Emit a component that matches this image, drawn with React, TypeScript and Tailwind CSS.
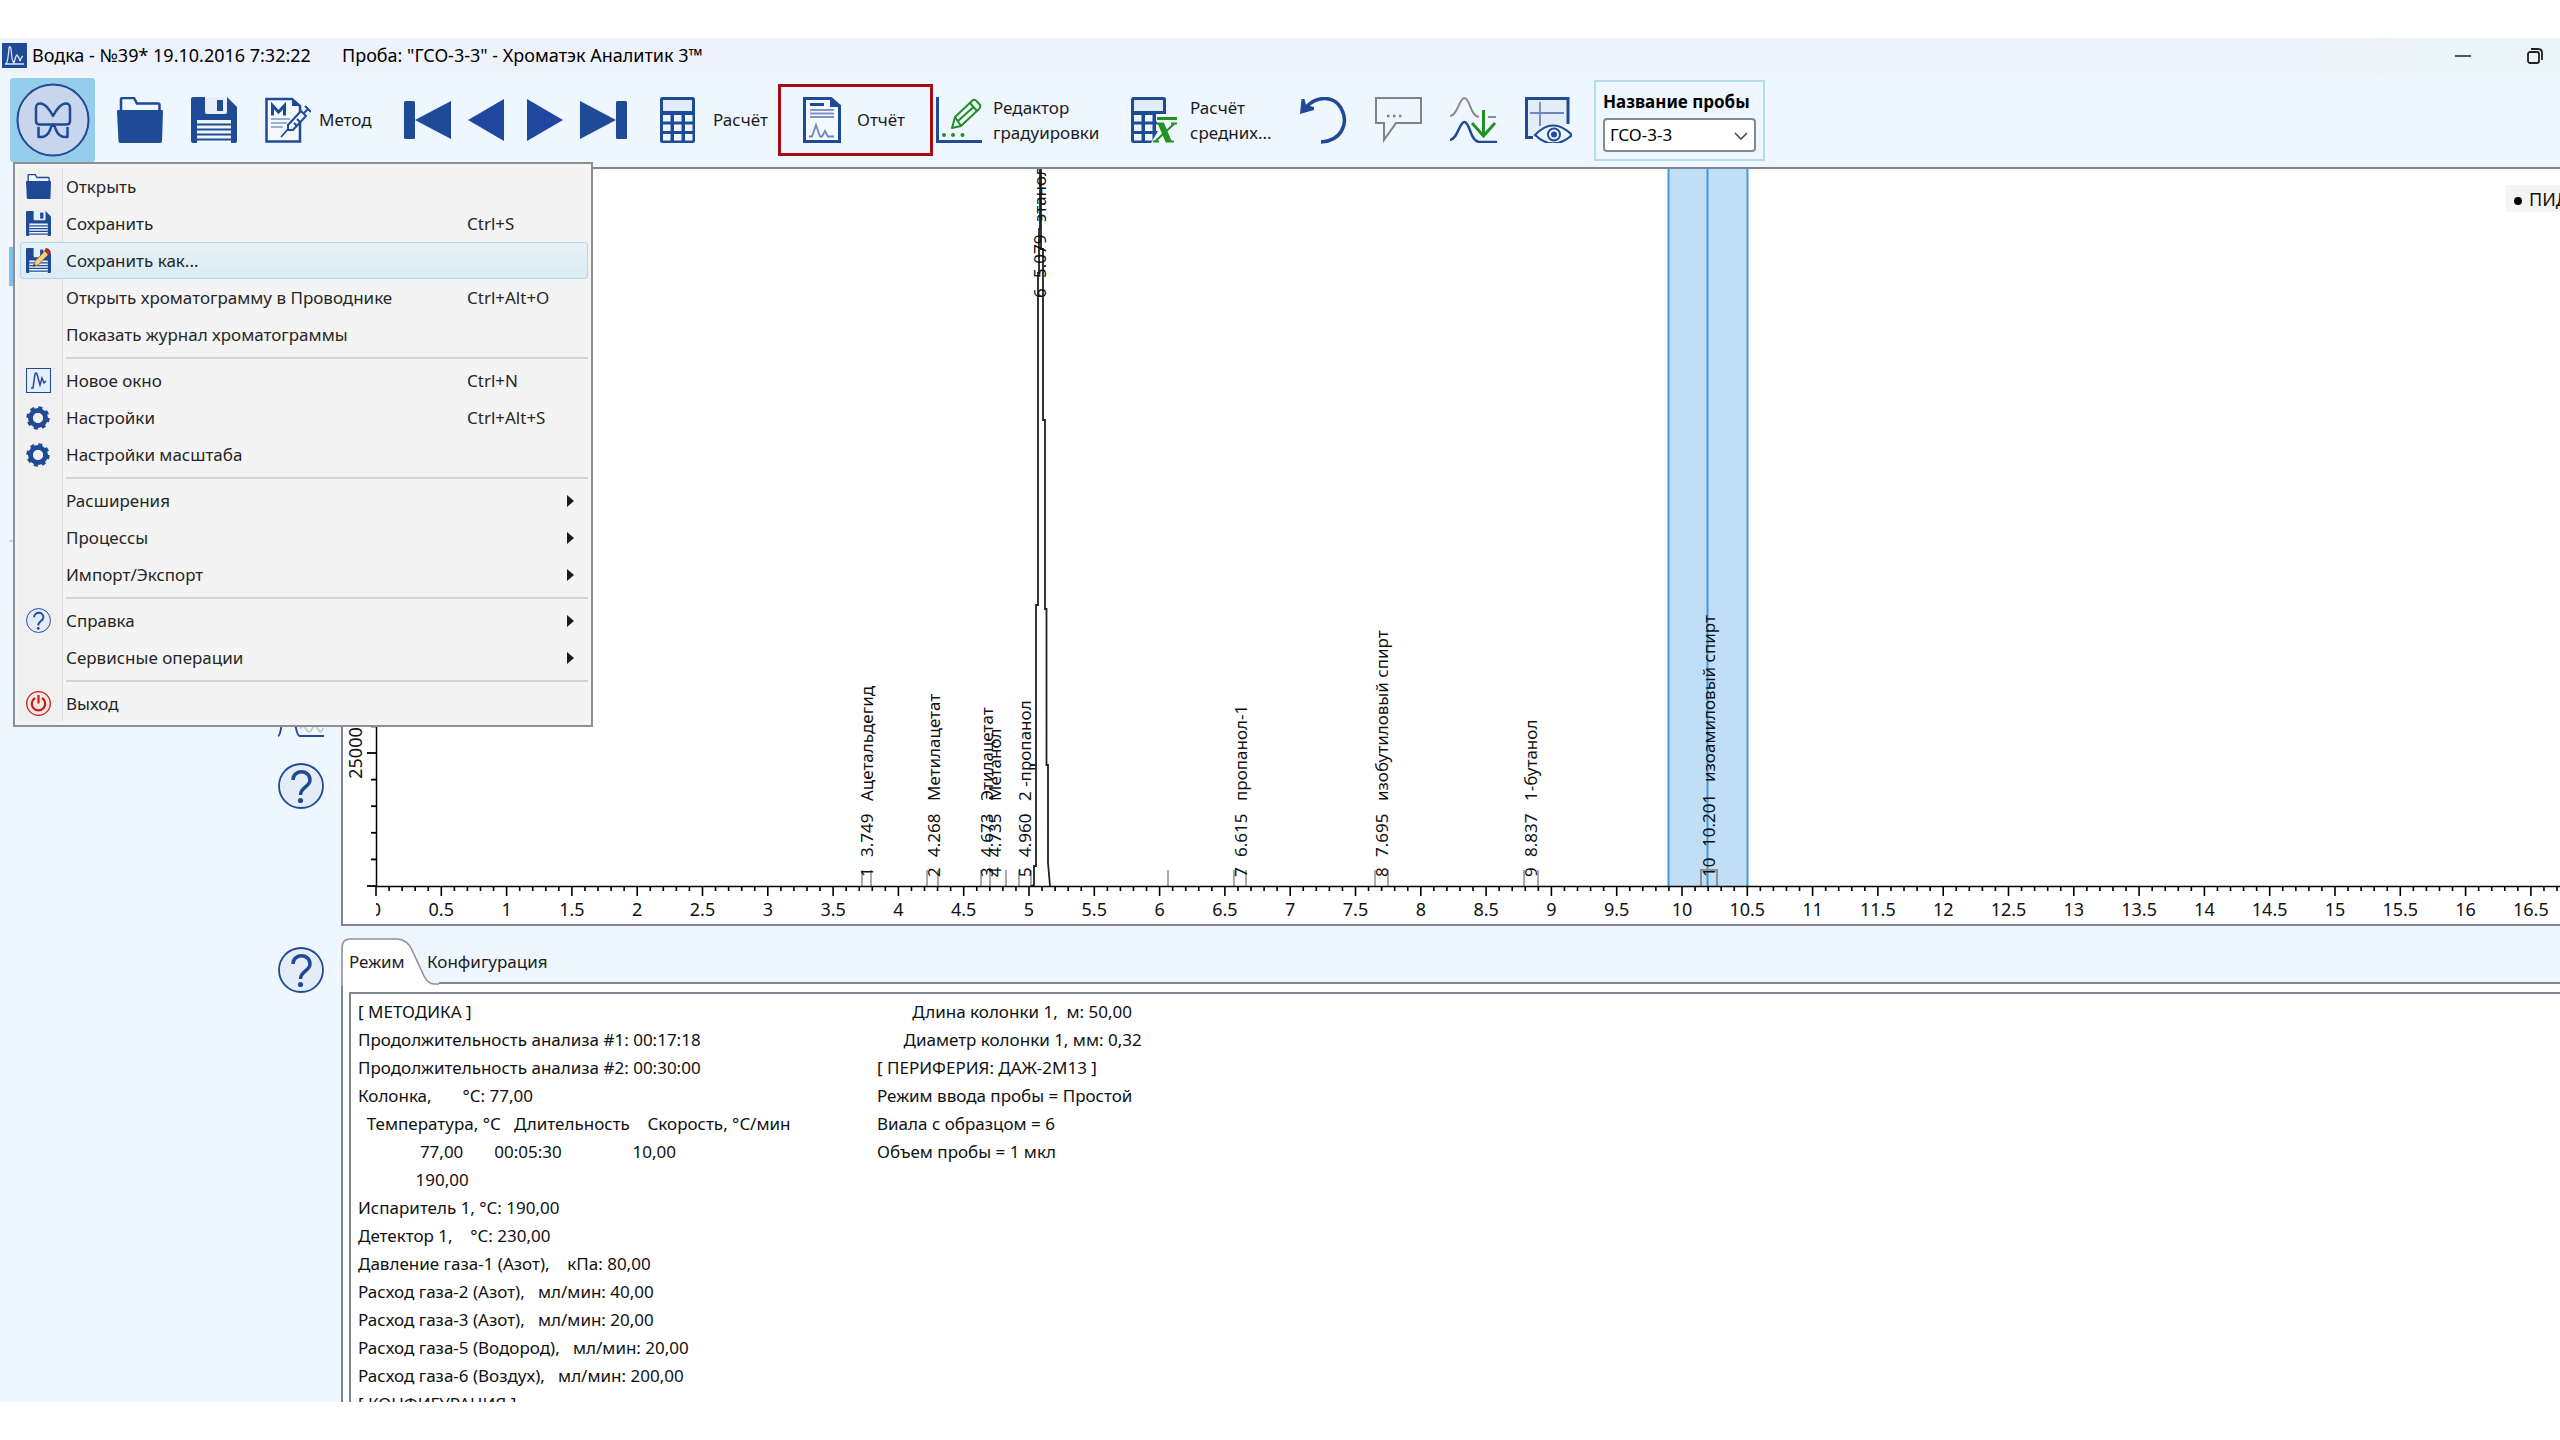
import { useState, type ReactNode } from 'react';

const BLUE = '#1f4a96';
const GREEN = '#249024';

/* ---------- Icons ---------- */

function FolderIcon({ className }: { className: string }) {
  return (
    <svg viewBox="0 0 46 46" className={className} aria-hidden="true">
      <path d="M4 13V2.500Q4 1 5.500 1H17L20 6.500H41Q42.500 6.500 42.500 8V13" fill="#eef7ff" stroke={BLUE} strokeWidth="2.500" />
      <path d="M1 13H45Q46 13 46 14.500L45 44Q45 46 43 46H3.500Q1.500 46 1.500 44L0 14.500Q0 13 1 13Z" fill={BLUE} />
    </svg>
  );
}

function FloppyIcon({ className, pencil = false }: { className: string; pencil?: boolean }) {
  return (
    <svg viewBox="0 0 46 46" className={className} aria-hidden="true">
      <path d="M2 0H36L46 10V44Q46 46 44 46H2Q0 46 0 44V2Q0 0 2 0Z" fill={BLUE} />
      <path d="M14 0H36V15Q36 17 34 17H16Q14 17 14 15Z" fill="#e6eef9" />
      <rect x="26" y="3" width="6" height="11" fill={BLUE} />
      <rect x="6" y="23" width="34" height="23" fill="#eef5fd" />
      <path d="M6 27.500H40M6 32.500H40M6 37.500H40M6 42.500H40" stroke={BLUE} strokeWidth="2.200" />
      {pencil && (
        <g strokeWidth="1.500">
          <path d="M13 34L17 24L37 3L43 10L23 31Z" fill="#f6cf86" stroke="#8a5a1c" />
          <path d="M35 5L38 1Q42 1 45 7L41 12Z" fill="#c32a1d" stroke="#8d1a12" />
          <path d="M13 34L15 29L18 32Z" fill="#333" />
        </g>
      )}
    </svg>
  );
}

function ButterflyLogo() {
  return (
    <svg viewBox="0 0 74 74" className="h-[74px] w-[74px]" aria-hidden="true">
      <circle cx="37" cy="37" r="35.500" fill="#c9d5ec" stroke={BLUE} strokeWidth="2" />
      <g fill="none" stroke={BLUE} strokeWidth="2.500" strokeLinejoin="round">
        <path d="M20 25Q20 20 25 20.500Q31 21.500 37 33Q43 21.500 49 20.500Q54 20 54 25V38Q54 41.500 50.500 41.500H23.500Q20 41.500 20 38Z" />
        <path d="M22.500 44V54Q31 55 34 47Q35 43 37 41.500Q39 43 40 47Q43 55 51.500 54V44" />
      </g>
    </svg>
  );
}

function MethodIcon() {
  return (
    <svg viewBox="0 0 46 46" className="h-[46px] w-[46px] shrink-0" aria-hidden="true">
      <path d="M1.500 2H27L35 9V44.500H1.500Z" fill="#f4f9ff" stroke={BLUE} strokeWidth="2.500" />
      <path d="M27 2V9H35Z" fill={BLUE} />
      <path d="M7.500 18.500V8.500L13.500 15L19.500 8.500V18.500" fill="none" stroke={BLUE} strokeWidth="3" />
      <path d="M6 22H25M6 26H22M6 30H18" stroke="#7e96c4" strokeWidth="1.700" />
      <path d="M16 40L24 31" stroke={BLUE} strokeWidth="1.800" />
      <path d="M23 28L36 14L41 19L28 33H23Z" fill="#eef5fd" stroke={BLUE} strokeWidth="2" />
      <path d="M29 26L32 29M32 22L35 25M39 16L43 12M40 9L46 15" stroke={BLUE} strokeWidth="2" />
    </svg>
  );
}

function CalculatorBody() {
  return (
    <g>
      <rect x="1" y="1" width="33" height="44" rx="1.500" fill={BLUE} stroke={BLUE} strokeWidth="2" />
      <rect x="3" y="3" width="29" height="11" fill="#e2ebf7" />
      {[18, 27.500, 37].map((y) =>
        [3, 14, 25].map((x) => <rect key={`${x}-${y}`} x={x} y={y} width="7.500" height="6.500" fill="#eef5fd" />),
      )}
    </g>
  );
}

function CalculatorIcon() {
  return (
    <svg viewBox="0 0 36 46" className="h-[46px] w-[36px] shrink-0" aria-hidden="true">
      <CalculatorBody />
    </svg>
  );
}

function AverageIcon() {
  return (
    <svg viewBox="0 0 47 46" className="h-[46px] w-[47px] shrink-0" aria-hidden="true">
      <CalculatorBody />
      <path d="M25 17H47V46H20L27 34Z" fill="#eef7ff" />
      <path d="M26 21.500H46" stroke={GREEN} strokeWidth="3" />
      <path d="M26.500 26H33L41 45H34.500Z" fill={GREEN} />
      <path d="M24 44.500L43.500 26.500M40 26.500H46M22 44.500H28M26 26.500H33M35 44.500H43" stroke={GREEN} strokeWidth="2" />
    </svg>
  );
}

function ReportIcon() {
  return (
    <svg viewBox="0 0 38 46" className="h-[46px] w-[38px] shrink-0" aria-hidden="true">
      <path d="M1.500 1.500H28L36.500 9V44.500H1.500Z" fill="#f4f9ff" stroke={BLUE} strokeWidth="3" />
      <path d="M27 1V10H37Z" fill={BLUE} />
      <path d="M7 7.500H21" stroke={BLUE} strokeWidth="3" />
      <path d="M7 13H31M7 16.500H31M7 20H31" stroke="#7e96c4" strokeWidth="1.800" />
      <path d="M6 39.500H9L13 28L17 39.500H19L22 34L25 39.500H31" fill="none" stroke="#6c88bd" strokeWidth="1.800" />
    </svg>
  );
}

function EditorIcon() {
  return (
    <svg viewBox="0 0 46 46" className="h-[46px] w-[46px] shrink-0" aria-hidden="true">
      <path d="M1.500 0V44.500H46" fill="none" stroke={BLUE} strokeWidth="3" />
      <g fill="none" stroke={GREEN} strokeWidth="2" strokeLinejoin="round">
        <path d="M16 31L19 20L37 3Q39 2 41 4.500L44 8Q45 10 43 12L25 29Z" />
        <path d="M19 20L25 29M34 6L41 14M22 24L38 9.500" />
      </g>
      <circle cx="8" cy="38" r="2" fill={GREEN} />
      <circle cx="17" cy="38" r="2" fill={GREEN} />
      <circle cx="26.500" cy="38" r="2" fill={GREEN} />
    </svg>
  );
}

function UndoIcon() {
  return (
    <svg viewBox="0 0 47 47" className="h-[47px] w-[47px]" aria-hidden="true">
      <path d="M6 10C18-2 34-1 41 11C50 28 40 44 21 45" fill="none" stroke={BLUE} strokeWidth="3.500" />
      <path d="M0 17L1.500 2H4.500L6 8L14 10V13Z" fill={BLUE} />
    </svg>
  );
}

function CommentIcon() {
  return (
    <svg viewBox="0 0 47 46" className="h-[46px] w-[47px]" aria-hidden="true">
      <path d="M1 1H46V26H21L9 43V26H1Z" fill="none" stroke="#808388" strokeWidth="2" />
      <path d="M12 19h2.500M18 19h2.500M24 19h2.500" stroke="#808388" strokeWidth="2.500" />
    </svg>
  );
}

function PeaksIcon() {
  return (
    <svg viewBox="0 0 47 46" className="h-[46px] w-[47px]" aria-hidden="true">
      <g fill="none" strokeWidth="2">
        <path d="M0 19C8 18 9 1 14.500 1C20 1 20 19 29 20M38 20H46" stroke="#8b8e94" />
        <path d="M0 43C8 42 9 25 14.500 25C20 25 20 45 30 45H47" stroke={BLUE} strokeWidth="2.500" />
        <path d="M33.500 13V38M22 26L33.500 39L45 26" stroke={GREEN} strokeWidth="3" />
      </g>
    </svg>
  );
}

function PreviewIcon() {
  return (
    <svg viewBox="0 0 47 46" className="h-[46px] w-[47px]" aria-hidden="true">
      <path d="M43 27V1.500H1.500V40.500H8" fill="#e4ecf8" stroke={BLUE} strokeWidth="3" />
      <path d="M5 16H39M15 5V29" stroke="#6c88bd" strokeWidth="1.800" />
      <path d="M10 38Q28 19 47 38Q28 55 10 38Z" fill="#eef7ff" stroke={BLUE} strokeWidth="2.200" />
      <circle cx="29" cy="37.500" r="6" fill="none" stroke={BLUE} strokeWidth="2" />
      <circle cx="29" cy="37.500" r="3" fill={BLUE} />
    </svg>
  );
}

function HelpIcon({ className }: { className: string }) {
  return (
    <svg viewBox="0 0 46 46" className={className} aria-hidden="true">
      <circle cx="23" cy="23" r="22" fill="#e4ecf8" stroke={BLUE} strokeWidth="1.800" />
      <path d="M15 17C15 6 32 6 32 17C32 24 22.500 24 22.500 32" fill="none" stroke={BLUE} strokeWidth="3.500" />
      <circle cx="22.500" cy="37.500" r="2.600" fill={BLUE} />
    </svg>
  );
}

function GearIcon() {
  return (
    <svg viewBox="0 0 24 24" className="h-[24px] w-[24px]" aria-hidden="true">
      <circle cx="12" cy="12" r="7.500" fill="none" stroke={BLUE} strokeWidth="5" />
      <circle cx="12" cy="12" r="10.200" fill="none" stroke={BLUE} strokeWidth="3" strokeDasharray="4 4.010" />
      <circle cx="12" cy="12" r="5" fill="#f0f0f0" />
    </svg>
  );
}

function NewWindowIcon() {
  return (
    <svg viewBox="0 0 25 25" className="h-[25px] w-[25px]" aria-hidden="true">
      <rect x="0.500" y="0.500" width="24" height="24" fill="#e6eefa" stroke={BLUE} />
      <path d="M5 20H7L9 6Q10 4 11 6L14 17L16 10L18 15L20 13" fill="none" stroke={BLUE} strokeWidth="1.500" />
    </svg>
  );
}

function PowerIcon() {
  return (
    <svg viewBox="0 0 25 25" className="h-[25px] w-[25px]" aria-hidden="true">
      <circle cx="12.500" cy="12.500" r="11.800" fill="#f8e8e6" stroke="#c4201c" strokeWidth="1.300" />
      <path d="M9 7A6.700 6.700 0 1 0 16 7M12.500 4V12.500" fill="none" stroke="#c4201c" strokeWidth="2.200" />
    </svg>
  );
}

/* ---------- Toolbar ---------- */

function ToolButton({ label, className, children }: { label: string; className: string; children: ReactNode }) {
  return (
    <button type="button" aria-label={label} className={`flex shrink-0 items-center ${className}`}>
      {children}
    </button>
  );
}

type MenuEntry = { label: string; keys?: string; icon?: ReactNode; sub?: boolean } | null;

const MENU: MenuEntry[] = [
  { label: 'Открыть', icon: <FolderIcon className="h-[25px] w-[25px]" /> },
  { label: 'Сохранить', keys: 'Ctrl+S', icon: <FloppyIcon className="h-[25px] w-[25px]" /> },
  { label: 'Сохранить как...', icon: <FloppyIcon className="h-[25px] w-[25px]" pencil /> },
  { label: 'Открыть хроматограмму в Проводнике', keys: 'Ctrl+Alt+O' },
  { label: 'Показать журнал хроматограммы' },
  null,
  { label: 'Новое окно', keys: 'Ctrl+N', icon: <NewWindowIcon /> },
  { label: 'Настройки', keys: 'Ctrl+Alt+S', icon: <GearIcon /> },
  { label: 'Настройки масштаба', icon: <GearIcon /> },
  null,
  { label: 'Расширения', sub: true },
  { label: 'Процессы', sub: true },
  { label: 'Импорт/Экспорт', sub: true },
  null,
  { label: 'Справка', sub: true, icon: <HelpIcon className="h-[25px] w-[25px]" /> },
  { label: 'Сервисные операции', sub: true },
  null,
  { label: 'Выход', icon: <PowerIcon /> },
];

function MainMenu() {
  const [active, setActive] = useState('Сохранить как...');

  return (
    <div
      role="menu"
      className="absolute left-[3px] top-[84px] z-20 w-[580px] border-2 border-[#8c9095] bg-[#f4f4f4] pb-[3px] pl-[5px] pr-[3px] pt-1 text-[#262626]"
    >
      {/* Icon gutter */}
      <div className="absolute inset-y-1 left-0.5 w-[46px] border-r border-[#dcdcdc] bg-[#f0f0f0]" />
      {MENU.map((entry, index) =>
        entry === null ? (
          <div key={index} className="flex h-[9px] items-center pl-[46px]">
            <div className="h-0.5 w-full bg-[#d3d3d3]" />
          </div>
        ) : (
          <button
            key={entry.label}
            type="button"
            role="menuitem"
            onMouseEnter={() => setActive(entry.label)}
            className={`relative flex h-[37px] w-full items-center rounded-[3px] border text-left ${
              active === entry.label
                ? 'border-[#a9d9ec] bg-linear-to-b from-[#e9f1f5] to-[#dbecf5]'
                : 'border-transparent'
            }`}
          >
            <span className="flex w-[45px] justify-start pl-[5px]">{entry.icon}</span>
            <span className="w-[401px] whitespace-nowrap">{entry.label}</span>
            <span>{entry.keys}</span>
            {entry.sub && (
              <svg viewBox="0 0 7 12" className="ml-auto mr-[13px] h-[12px] w-[7px]" aria-hidden="true">
                <path d="M0 0L7 6L0 12Z" fill="#1c1c1c" />
              </svg>
            )}
          </button>
        ),
      )}
    </div>
  );
}

function Toolbar() {
  return (
    <div className="flex h-[94px] shrink-0 items-center pl-2.5">
      <div className="relative h-[84px] w-[85px] shrink-0">
        <button
          type="button"
          aria-label="Главное меню"
          className="flex h-full w-full items-center justify-center rounded-[3px] bg-[#95cdec]"
        >
          <ButterflyLogo />
        </button>
        <MainMenu />
      </div>
      <ToolButton label="Открыть" className="ml-[22px] w-[46px]">
        <FolderIcon className="h-[46px] w-[46px]" />
      </ToolButton>
      <ToolButton label="Сохранить" className="ml-7 w-[46px]">
        <FloppyIcon className="h-[46px] w-[46px]" />
      </ToolButton>
      <ToolButton label="Метод" className="ml-7 w-[139px] gap-2">
        <MethodIcon />
        <span>Метод</span>
      </ToolButton>
      <ToolButton label="Первая" className="w-[47px]">
        <svg viewBox="0 0 47 38" className="h-[38px] w-[47px]" aria-hidden="true">
          <rect width="11" height="38" rx="1.500" fill={BLUE} />
          <path d="M11 19L47 0V38Z" fill={BLUE} />
        </svg>
      </ToolButton>
      <ToolButton label="Предыдущая" className="ml-[17px] w-[36px]">
        <svg viewBox="0 0 36 42" className="h-[42px] w-[36px]" aria-hidden="true">
          <path d="M0 21L36 0V42Z" fill="#20469f" />
        </svg>
      </ToolButton>
      <ToolButton label="Следующая" className="ml-[23px] w-[36px]">
        <svg viewBox="0 0 36 42" className="h-[42px] w-[36px]" aria-hidden="true">
          <path d="M36 21L0 0V42Z" fill="#20469f" />
        </svg>
      </ToolButton>
      <ToolButton label="Последняя" className="ml-[17px] w-[47px]">
        <svg viewBox="0 0 47 38" className="h-[38px] w-[47px]" aria-hidden="true">
          <rect x="36" width="11" height="38" rx="1.500" fill={BLUE} />
          <path d="M36 19L0 0V38Z" fill={BLUE} />
        </svg>
      </ToolButton>
      <ToolButton label="Расчёт" className="ml-[33px] w-[118px] gap-[17px]">
        <CalculatorIcon />
        <span>Расчёт</span>
      </ToolButton>
      <ToolButton label="Отчёт" className="h-[72px] w-[155px] gap-4 border-[3px] border-[#a90a12] pl-[22px]">
        <ReportIcon />
        <span>Отчёт</span>
      </ToolButton>
      <ToolButton label="Редактор градуировки" className="ml-[3px] w-[195px] gap-[11px] text-left">
        <EditorIcon />
        <span className="leading-[25px]">
          Редактор
          <br />
          градуировки
        </span>
      </ToolButton>
      <ToolButton label="Расчёт средних" className="w-[169px] gap-3 text-left">
        <AverageIcon />
        <span className="leading-[25px]">
          Расчёт
          <br />
          средних...
        </span>
      </ToolButton>
      <ToolButton label="Отменить" className="w-[47px]">
        <UndoIcon />
      </ToolButton>
      <ToolButton label="Комментарий" className="ml-7 w-[47px]">
        <CommentIcon />
      </ToolButton>
      <ToolButton label="Вычесть фон" className="ml-7 w-[47px]">
        <PeaksIcon />
      </ToolButton>
      <ToolButton label="Просмотр" className="ml-7 w-[47px]">
        <PreviewIcon />
      </ToolButton>

      <div className="ml-[22px] flex h-[81px] w-[171px] shrink-0 flex-col justify-center gap-1 border-2 border-[#b5dcea] px-[7px] pt-0.5">
        <label htmlFor="sample" className="whitespace-nowrap font-bold leading-[24px] text-black">
          Название пробы
        </label>
        <div className="relative">
          <select
            id="sample"
            className="h-[34px] w-full appearance-none rounded-[4px] border-2 border-[#85888d] bg-white pl-[5px] text-black"
          >
            <option>ГСО-3-3</option>
          </select>
          <svg viewBox="0 0 14 8" className="pointer-events-none absolute right-2 top-[14px] h-[8px] w-[14px]" aria-hidden="true">
            <path d="M1 1L7 7L13 1" fill="none" stroke="#444" strokeWidth="1.500" />
          </svg>
        </div>
      </div>
    </div>
  );
}

/* ---------- Chromatogram ---------- */

const ORIGIN = 33;
const AXIS_Y = 717;
const PER_MINUTE = 130.6;
const toX = (minutes: number) => ORIGIN + minutes * PER_MINUTE;

const PEAKS = [
  { time: 3.749, name: 'Ацетальдегид', y: 708 },
  { time: 4.268, name: 'Метилацетат', y: 708 },
  { time: 4.673, name: 'Этилацетат', y: 708 },
  { time: 4.735, name: 'Метанол', y: 708 },
  { time: 4.96, name: '2 -пропанол', y: 708 },
  { time: 5.079, name: 'этанол', y: 129 },
  { time: 6.615, name: 'пропанол-1', y: 708 },
  { time: 7.695, name: 'изобутиловый спирт', y: 708 },
  { time: 8.837, name: '1-бутанол', y: 708 },
  { time: 10.201, name: 'изоамиловый спирт', y: 708 },
];

// Start and end of the integrated areas, px
const MARKS = [519, 528, 584, 595, 638, 647, 663, 676, 688, 825, 891, 903, 1032, 1045, 1181, 1195];

const TICKS = Array.from({ length: 181 }, (_, i) => i);

function Chromatogram() {
  return (
    <svg width="100%" height="755" className="block" fontSize="17" fill="#111" role="img" aria-label="Хроматограмма">
      <defs>
        <clipPath id="axis-labels">
          <rect x={ORIGIN} y={AXIS_Y} width="2400" height="40" />
        </clipPath>
      </defs>

      {/* Selected range */}
      <rect x="1325" y="0" width="80" height={AXIS_Y} fill="#c0def6" />
      <path d="M1325.500 0V717M1404.500 0V717M1364.500 0V717" stroke="#4298da" strokeWidth="2" />

      {MARKS.map((x) => (
        <path key={x} d={`M${x} 701V717`} stroke="#8f8f8f" strokeWidth="1.500" />
      ))}
      <path d="M1358 717V701H1374V717" fill="none" stroke="#8f8f8f" strokeWidth="2" />

      {/* Signal */}
      <path
        d="M688 717L691 716V697H693V436H695V104H696V60H697V0M707 717L705 694V596H703.500V440H702V251H700V80H698V0M687 596H693"
        fill="none"
        stroke="#222"
        strokeWidth="1.800"
      />

      {PEAKS.map((peak, index) => (
        <text
          key={peak.time}
          transform={`translate(${Math.round(toX(peak.time)) + 7} ${peak.y}) rotate(-90)`}
        >
          <tspan>{index + 1}</tspan>
          <tspan x={index < 9 ? 20 : 30}>{peak.time.toFixed(3)}</tspan>
          <tspan x={index < 9 ? 76 : 95}>{peak.name}</tspan>
        </text>
      ))}

      {/* Axes */}
      <path d="M33.500 0V717M33 717.500H2400" stroke="#000" strokeWidth="1.500" />
      {TICKS.map((i) => (
        <path
          key={i}
          d={i % 5 === 0 ? `M${toX(i / 10)} 717v10` : `M${toX(i / 10)} 717v5`}
          stroke="#000"
          strokeWidth="1.600"
        />
      ))}
      <g clipPath="url(#axis-labels)" textAnchor="middle" fontSize="18">
        {TICKS.filter((i) => i % 5 === 0).map((i) => (
          <text key={i} x={toX(i / 10)} y="747">
            {i / 10}
          </text>
        ))}
      </g>
      {Array.from({ length: 26 }, (_, i) => (
        <path
          key={i}
          d={i % 5 === 0 ? `M24 ${AXIS_Y - i * 26.600}H33` : `M28 ${AXIS_Y - i * 26.600}H33`}
          stroke="#000"
          strokeWidth="1.800"
        />
      ))}
      <text transform="translate(19 584) rotate(-90)" textAnchor="middle" fontSize="18">
        25000
      </text>

      {/* Legend */}
      <rect x="2163" y="16" width="90" height="27" fill="#f4f4f4" />
      <circle cx="2175" cy="32" r="4" fill="#000" />
      <text x="2186" y="37" fontSize="18">
        ПИД
      </text>
    </svg>
  );
}

/* ---------- Method report ---------- */

const METHOD_TEXT = [
  '[ МЕТОДИКА ]',
  'Продолжительность анализа #1: 00:17:18',
  'Продолжительность анализа #2: 00:30:00',
  'Колонка,       °C: 77,00',
  '  Температура, °C   Длительность    Скорость, °C/мин',
  '              77,00       00:05:30                10,00',
  '             190,00',
  'Испаритель 1, °C: 190,00',
  'Детектор 1,    °C: 230,00',
  'Давление газа-1 (Азот),    кПа: 80,00',
  'Расход газа-2 (Азот),   мл/мин: 40,00',
  'Расход газа-3 (Азот),   мл/мин: 20,00',
  'Расход газа-5 (Водород),   мл/мин: 20,00',
  'Расход газа-6 (Воздух),   мл/мин: 200,00',
  '[ КОНФИГУРАЦИЯ ]',
];

const DEVICE_TEXT = [
  '        Длина колонки 1,  м: 50,00',
  '      Диаметр колонки 1, мм: 0,32',
  '[ ПЕРИФЕРИЯ: ДАЖ-2М13 ]',
  'Режим ввода пробы = Простой',
  'Виала с образцом = 6',
  'Объем пробы = 1 мкл',
];

function ReportPanel() {
  return (
    <section className="flex min-w-0 flex-1 flex-col pt-3">
      <div role="tablist" className="flex h-[46px] shrink-0">
        <button type="button" role="tab" aria-selected="true" className="relative w-[98px] shrink-0 pt-0.5 text-left">
          <svg viewBox="0 0 98 48" className="absolute left-0 top-0 h-[48px] w-[98px]" aria-hidden="true">
            <path d="M0 48V10Q1 1 9 1H56Q66 1 71 12L83 38Q87 46 93 46H98V48Z" fill="#fff" />
            <path
              d="M1 48V10Q1 1 9 1H56Q66 1 71 12L83 38Q87 46 93 46H98"
              fill="none"
              stroke="#8b919b"
              strokeWidth="1.600"
            />
          </svg>
          <span className="relative pl-2">Режим</span>
        </button>
        <button
          type="button"
          role="tab"
          aria-selected="false"
          className="flex-1 border-b-2 border-[#7f868f] pt-1 text-left"
        >
          <span className="relative -left-3">Конфигурация</span>
        </button>
      </div>
      <div className="flex min-h-0 flex-1 border-l-2 border-[#7f868f] bg-white pl-1.5 pt-2">
        <div className="flex min-w-0 flex-1 overflow-hidden border-l-2 border-t-2 border-[#7f868f] pl-[7px] pt-1 leading-[28px] text-[#111]">
          <pre className="w-[519px] shrink-0 font-[inherit]">{METHOD_TEXT.join('\n')}</pre>
          <pre className="font-[inherit]">{DEVICE_TEXT.join('\n')}</pre>
        </div>
      </div>
    </section>
  );
}

function HelpButton() {
  return (
    <button type="button" aria-label="Справка">
      <HelpIcon className="h-[46px] w-[46px]" />
    </button>
  );
}

/* ---------- Window ---------- */

export default function App() {
  return (
    <div className="h-screen overflow-hidden bg-white py-[38px] font-['Noto_Sans','Open_Sans',sans-serif] text-[17px] text-[#1c1c1c]">
      <div className="flex h-full flex-col overflow-hidden bg-[#eef7ff]">
        <header className="flex h-[35px] shrink-0 items-center bg-linear-to-r from-[#eef2fa] from-90% to-[#ebf4f6] to-95% pl-0.5">
          <svg viewBox="0 0 25 25" className="mr-[5px] h-[25px] w-[25px] shrink-0" aria-hidden="true">
            <rect width="25" height="25" fill={BLUE} />
            <path d="M3 21H22M4 21Q6 19 7 5Q8 2 9 6Q10 19 12 20Q14 12 15 12Q17 14 18 18Q19 14 21 13" fill="none" stroke="#dfe8f6" strokeWidth="1.300" />
          </svg>
          <h1 className="flex whitespace-nowrap text-[18px] text-black">
            <span className="w-[310px]">Водка - №39* 19.10.2016 7:32:22</span>
            <span>Проба: "ГСО-3-3" - Хроматэк Аналитик 3™</span>
          </h1>
          <div className="ml-auto flex items-center gap-14 pr-[17px]">
            <button type="button" aria-label="Свернуть" className="flex h-[16px] w-[16px] items-center">
              <span className="h-0.5 w-full bg-[#555]" />
            </button>
            <button type="button" aria-label="Восстановить">
              <svg viewBox="0 0 16 16" className="h-[16px] w-[16px]" fill="none" stroke="#222" strokeWidth="1.800" aria-hidden="true">
                <rect x="1" y="4" width="11" height="11" rx="2" />
                <path d="M4 1H11Q15 1 15 5V12" />
              </svg>
            </button>
          </div>
        </header>

        <Toolbar />

        <div className="flex shrink-0">
          <aside className="relative flex w-[341px] shrink-0 flex-col items-end justify-end gap-[26px] pb-[117px] pr-[17px]">
            <div className="absolute left-[9px] top-[80px] h-[39px] w-2 bg-[#7cc2ea]" />
            <div className="absolute left-[9px] top-[373px] h-0.5 w-2 bg-[#b5dcea]" />
            <svg viewBox="0 0 46 46" className="h-[46px] w-[46px]" fill="none" strokeWidth="1.800" aria-hidden="true">
              <path d="M22 38Q25 32 28 38T34 38T40 38T45 37" stroke="#c5cad2" />
              <path d="M0 45C5 44 5 2 11 2C17 2 15 45 22 45H46" stroke={BLUE} />
            </svg>
            <HelpButton />
          </aside>
          <main className="min-w-0 flex-1 overflow-hidden border-y-2 border-l-2 border-[#7f868f] bg-white">
            <Chromatogram />
          </main>
        </div>

        <div className="flex min-h-0 flex-1">
          <aside className="flex w-[341px] shrink-0 justify-end pr-[17px] pt-[21px]">
            <div>
              <HelpButton />
            </div>
          </aside>
          <ReportPanel />
        </div>
      </div>
    </div>
  );
}
